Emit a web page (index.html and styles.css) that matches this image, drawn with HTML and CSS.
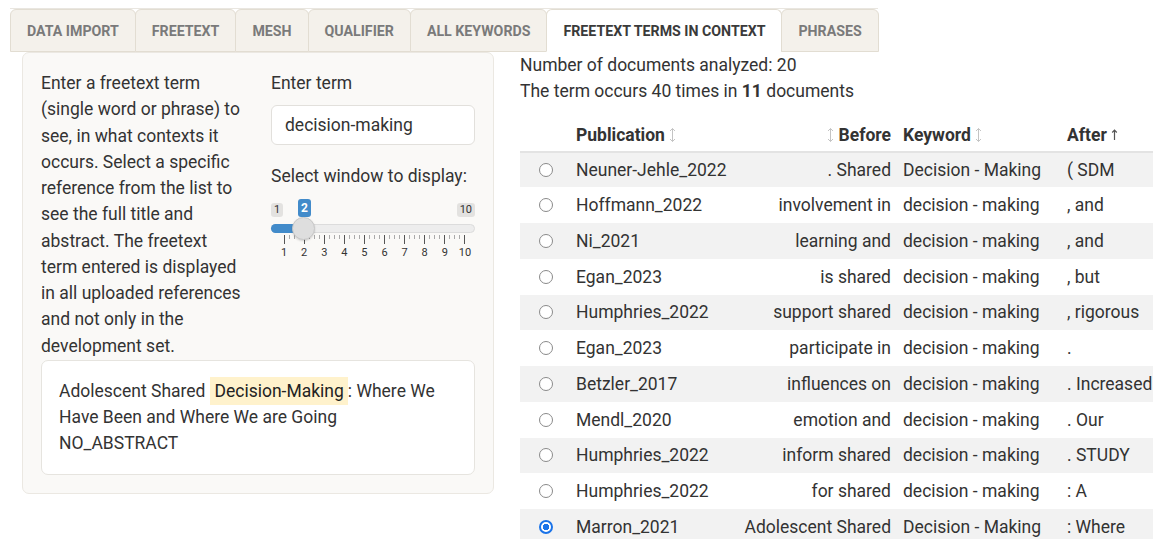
FILE: index.html
```html
<!DOCTYPE html>
<html lang="en">
<head>
<meta charset="utf-8">
<title>Freetext terms in context</title>
<link rel="stylesheet" href="styles.css">
</head>
<body>
<nav class="tabs">
  <a class="tab">Data import</a>
  <a class="tab">Freetext</a>
  <a class="tab">MeSH</a>
  <a class="tab">Qualifier</a>
  <a class="tab">All keywords</a>
  <a class="tab active">Freetext terms in context</a>
  <a class="tab">Phrases</a>
</nav>

<div class="page">
  <aside class="well">
    <div class="well-grid">
      <p class="help">Enter a freetext term (single word or phrase) to see, in what contexts it occurs. Select a specific reference from the list to see the full title and abstract. The freetext term entered is displayed in all uploaded references and not only in the development set.</p>
      <div class="controls">
        <label class="ctl-label">Enter term</label>
        <div class="text-input">decision-making</div>
        <label class="ctl-label slider-label">Select window to display:</label>
        <div class="slider">
          <div class="slider-tags">
            <span class="tag">1</span>
            <span class="tag tag-value">2</span>
            <span class="tag">10</span>
          </div>
          <div class="slider-track">
            <div class="slider-bar"></div>
            <div class="slider-handle"></div>
          </div>
          <div class="slider-grid"></div>
          <div class="slider-nums">
            <span>1</span><span>2</span><span>3</span><span>4</span><span>5</span><span>6</span><span>7</span><span>8</span><span>9</span><span>10</span>
          </div>
        </div>
      </div>
    </div>
    <div class="abstract">
      <p>Adolescent Shared<mark>Decision-Making</mark>: Where We Have Been and Where We are Going</p>
      <p>NO_ABSTRACT</p>
    </div>
  </aside>

  <main class="results">
    <p class="stat">Number of documents analyzed: 20</p>
    <p class="stat">The term occurs 40 times in <b>11</b> documents</p>
    <table class="kwic">
      <colgroup>
        <col class="c-sel"><col class="c-pub"><col class="c-before"><col class="c-kw"><col class="c-after">
      </colgroup>
      <thead>
        <tr>
          <th></th>
          <th>Publication <svg class="sort" viewBox="0 0 7 16" width="7" height="16"><path d="M3.5 1.5v13M1 4l2.5-2.5L6 4M1 12l2.5 2.5L6 12" fill="none" stroke="currentColor" stroke-width="1"/></svg></th>
          <th class="right"><svg class="sort" viewBox="0 0 7 16" width="7" height="16"><path d="M3.5 1.5v13M1 4l2.5-2.5L6 4M1 12l2.5 2.5L6 12" fill="none" stroke="currentColor" stroke-width="1"/></svg> Before</th>
          <th>Keyword <svg class="sort" viewBox="0 0 7 16" width="7" height="16"><path d="M3.5 1.5v13M1 4l2.5-2.5L6 4M1 12l2.5 2.5L6 12" fill="none" stroke="currentColor" stroke-width="1"/></svg></th>
          <th>After <svg class="sort sorted" viewBox="0 0 7 16" width="7" height="16"><path d="M3.5 3v10M1.2 5.5l2.3-2.3 2.3 2.3" fill="none" stroke="currentColor" stroke-width="1.2"/></svg></th>
        </tr>
      </thead>
      <tbody>
        <tr><td><span class="radio"></span></td><td>Neuner-Jehle_2022</td><td class="right">. Shared</td><td>Decision - Making</td><td>( SDM</td></tr>
        <tr><td><span class="radio"></span></td><td>Hoffmann_2022</td><td class="right">involvement in</td><td>decision - making</td><td>, and</td></tr>
        <tr><td><span class="radio"></span></td><td>Ni_2021</td><td class="right">learning and</td><td>decision - making</td><td>, and</td></tr>
        <tr><td><span class="radio"></span></td><td>Egan_2023</td><td class="right">is shared</td><td>decision - making</td><td>, but</td></tr>
        <tr><td><span class="radio"></span></td><td>Humphries_2022</td><td class="right">support shared</td><td>decision - making</td><td>, rigorous</td></tr>
        <tr><td><span class="radio"></span></td><td>Egan_2023</td><td class="right">participate in</td><td>decision - making</td><td>.</td></tr>
        <tr><td><span class="radio"></span></td><td>Betzler_2017</td><td class="right">influences on</td><td>decision - making</td><td>. Increased</td></tr>
        <tr><td><span class="radio"></span></td><td>Mendl_2020</td><td class="right">emotion and</td><td>decision - making</td><td>. Our</td></tr>
        <tr><td><span class="radio"></span></td><td>Humphries_2022</td><td class="right">inform shared</td><td>decision - making</td><td>. STUDY</td></tr>
        <tr><td><span class="radio"></span></td><td>Humphries_2022</td><td class="right">for shared</td><td>decision - making</td><td>: A</td></tr>
        <tr><td><span class="radio checked"></span></td><td>Marron_2021</td><td class="right">Adolescent Shared</td><td>Decision - Making</td><td>: Where</td></tr>
      </tbody>
    </table>
  </main>
</div>
</body>
</html>
```

FILE: styles.css
```css
* { box-sizing: border-box; }

html, body {
  margin: 0;
  background: #ffffff;
  color: #333333;
  font-family: Roboto, "Liberation Sans", Arial, sans-serif;
  font-size: 17.5px;
  line-height: 1.5;
  overflow: hidden;
}

p { margin: 0; }

/* ---- tab strip ---- */
.tabs {
  display: inline-flex;
  margin: 8px 0 0 10px;
  border-top: 1px solid #e9e6e0;
}

.tab {
  display: block;
  height: 43px;
  padding: 0 16px;
  line-height: 42px;
  font-size: 14.2px;
  font-weight: 700;
  text-transform: uppercase;
  color: #7a7a7a;
  background: #f4f1eb;
  border: 1px solid #e2ddd2;
  border-top-left-radius: 6px;
  border-top-right-radius: 6px;
  margin-right: -1px;
}

.tab.active {
  background: #ffffff;
  color: #3a3a3a;
  border-bottom-color: #ffffff;
}

/* ---- page body ---- */
.page {
  display: flex;
  align-items: flex-start;
  gap: 26px;
  padding-left: 22px;
}

.well {
  flex: 0 0 472px;
  padding: 17px 18px 18px 18px;
  background: #faf9f7;
  border: 1px solid #ebe8e2;
  border-radius: 7px;
}

.well-grid {
  display: grid;
  grid-template-columns: 203px 204px;
  column-gap: 27px;
}

.controls { display: flex; flex-direction: column; }

.ctl-label { display: block; }

.text-input {
  margin-top: 9px;
  height: 40px;
  padding: 0 13px;
  line-height: 38px;
  background: #ffffff;
  border: 1px solid #e2e0dc;
  border-radius: 6px;
}

.slider-label { margin-top: 18px; }

/* ---- range slider ---- */
.slider { margin-top: 9px; position: relative; }

.slider-tags {
  display: flex;
  justify-content: space-between;
  align-items: flex-end;
  height: 19px;
}

.tag {
  font-size: 11px;
  line-height: 14px;
  padding: 0 3px;
  background: rgba(0, 0, 0, 0.09);
  color: #333;
  border-radius: 3px;
  margin-bottom: 1px;
}

.tag-value {
  position: absolute;
  left: 27px;
  top: 0;
  font-size: 12px;
  line-height: 18px;
  font-weight: 700;
  background: #428bca;
  color: #ffffff;
  padding: 0 3px;
}

.slider-track {
  position: relative;
  margin-top: 6px;
  height: 9px;
  background: #ededed;
  border: 1px solid #dcdcdc;
  border-radius: 5px;
}

.slider-bar {
  position: absolute;
  left: -1px;
  top: -1px;
  width: 33px;
  height: 9px;
  background: #428bca;
  border-radius: 5px 0 0 5px;
}

.slider-handle {
  position: absolute;
  left: 20px;
  top: -8px;
  width: 23px;
  height: 23px;
  border-radius: 50%;
  background: #dedede;
  border: 1px solid #c8c8c8;
  box-shadow: 0 1px 2px rgba(0,0,0,0.15);
}

.slider-grid {
  margin: 2px 0 0 13px;
  width: 181px;
  height: 9px;
  background:
    repeating-linear-gradient(to right, #555 0 1px, transparent 1px 20px) 0 0 / 100% 9px no-repeat,
    repeating-linear-gradient(to right, #aaa 0 1px, transparent 1px 5px) 0 0 / 100% 4px no-repeat;
}

.slider-nums {
  display: flex;
  margin-left: 3px;
  width: 201px;
  font-size: 11px;
  line-height: 18px;
  color: #333;
}

.slider-nums span { flex: 1 1 0; text-align: center; }

/* ---- title / abstract box ---- */
.abstract {
  margin-top: 1px;
  padding: 17px 17px 18px 17px;
  background: #ffffff;
  border: 1px solid #e6e4df;
  border-radius: 7px;
  line-height: 26px;
}

/* highlight drawn as a spread shadow so the word box stays tight */
mark {
  margin: 0 4px 0 9px;
  padding: 0;
  background: #fff2cc;
  box-shadow: 0 0 0 4px #fff2cc;
  color: #222;
}

/* ---- right-hand results ---- */
.results {
  flex: 1 1 auto;
  min-width: 0;
}

.kwic {
  margin-top: 15px;
  width: 640px;
  border-collapse: collapse;
  table-layout: fixed;
  white-space: nowrap;
}

.c-sel { width: 50px; }
.c-pub { width: 166px; }
.c-before { width: 161px; }
.c-kw { width: 164px; }
.c-after { width: 99px; }

.kwic th {
  height: 32px;
  padding: 0 6px;
  text-align: left;
  font-weight: 700;
  border-bottom: 2px solid #e3e3e3;
  line-height: 20px;
}

.kwic td {
  height: 35.75px;
  padding: 0 6px;
  line-height: 20px;
  overflow: hidden;
}

.kwic tbody tr:nth-child(odd) td { background: #f2f2f2; }

.kwic .right { text-align: right; }

.sort {
  display: inline-block;
  vertical-align: -2px;
  color: #c4c4c4;
}

.sort.sorted { color: #555; }

.radio {
  display: block;
  margin-left: 13px;
  width: 14px;
  height: 14px;
  border-radius: 50%;
  border: 1.5px solid #8a8a8a;
  background: #fff;
}

.radio.checked {
  border: 2px solid #1a73e8;
  background: radial-gradient(circle, #1a73e8 0 3px, #fff 3.5px);
}
```
